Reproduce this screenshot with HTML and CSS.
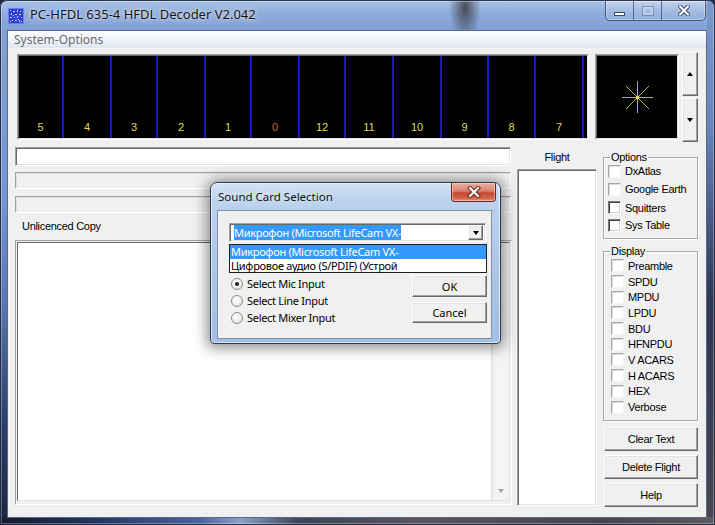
FILE: index.html
```html
<!DOCTYPE html>
<html lang="en">
<head>
<meta charset="utf-8">
<title>PC-HFDL 635-4 HFDL Decoder V2.042</title>
<link rel="stylesheet" href="styles.css">
</head>
<body>
<div class="win">
  <div class="titlebar">
    <svg class="appicon" width="16" height="16" viewBox="0 0 16 16">
      <rect x="0" y="0" width="16" height="16" fill="#2c3fd6"/>
      <rect x="0.5" y="0.5" width="15" height="15" fill="none" stroke="#6f7ff0" stroke-width="1"/>
      <g fill="#c9d0ff">
        <rect x="2" y="2" width="1" height="1"/><rect x="5" y="3" width="2" height="1"/><rect x="9" y="2" width="1" height="2"/>
        <rect x="12" y="3" width="1" height="1"/><rect x="3" y="5" width="1" height="2"/><rect x="7" y="6" width="2" height="1"/>
        <rect x="11" y="6" width="2" height="1"/><rect x="2" y="9" width="2" height="1"/><rect x="6" y="9" width="1" height="1"/>
        <rect x="9" y="8" width="1" height="2"/><rect x="13" y="9" width="1" height="1"/><rect x="4" y="12" width="1" height="1"/>
        <rect x="7" y="12" width="2" height="1"/><rect x="11" y="12" width="1" height="2"/><rect x="13" y="13" width="1" height="1"/>
        <rect x="5" y="7" width="1" height="1"/><rect x="10" y="11" width="1" height="1"/><rect x="2" y="13" width="1" height="1"/>
      </g>
    </svg>
    <span class="title">PC-HFDL 635-4 HFDL Decoder V2.042</span>
    <div class="caps">
      <div class="cap cap-min"><span class="g-min"></span></div>
      <div class="cap cap-max"><span class="g-max"></span></div>
      <div class="cap cap-close">
        <svg width="12" height="11" viewBox="0 0 12 11"><path d="M2 1.5 L10 9.5 M10 1.5 L2 9.5" stroke="#3a4a66" stroke-width="4" stroke-linecap="square"/><path d="M2 1.5 L10 9.5 M10 1.5 L2 9.5" stroke="#fff" stroke-width="2" stroke-linecap="square"/></svg>
      </div>
    </div>
  </div>

  <div class="client">
    <div class="menubar"><span>System-Options</span></div>

    <div class="toprow">
      <div class="spectrum">
        <div class="spec-inner">
          <div class="spec-col"><span>5</span></div>
          <div class="spec-col"><span>4</span></div>
          <div class="spec-col"><span>3</span></div>
          <div class="spec-col"><span>2</span></div>
          <div class="spec-col"><span>1</span></div>
          <div class="spec-col"><span class="zero">0</span></div>
          <div class="spec-col"><span>12</span></div>
          <div class="spec-col"><span>11</span></div>
          <div class="spec-col"><span>10</span></div>
          <div class="spec-col"><span>9</span></div>
          <div class="spec-col"><span>8</span></div>
          <div class="spec-col"><span>7</span></div>
          <div class="spec-fill"></div>
        </div>
      </div>
      <div class="scope">
        <div class="scope-inner">
          <svg width="80" height="82" viewBox="0 0 80 82">
            <g stroke="#b4b446" stroke-width="1">
              <line x1="40.5" y1="25" x2="40.5" y2="57"/>
              <line x1="25" y1="41.5" x2="56" y2="41.5"/>
              <line x1="29" y1="30" x2="52" y2="53"/>
              <line x1="52" y1="30" x2="29" y2="53"/>
            </g>
            <circle cx="40.5" cy="41.5" r="2" fill="#d8d860"/>
          </svg>
        </div>
      </div>
      <div class="spin">
        <div class="spinbtn"><span class="tri-up"></span></div>
        <div class="spinbtn"><span class="tri-down"></span></div>
      </div>
    </div>

    <div class="mainrow">
      <div class="leftcol">
        <div class="input"></div>
        <div class="status status-a"></div>
        <div class="status status-b"></div>
        <div class="lbl">Unlicenced Copy</div>
        <div class="textbox">
          <div class="tb-inner">
            <div class="tb-area"></div>
            <div class="vscroll"><span class="sc-down"></span></div>
          </div>
        </div>
      </div>

      <div class="flightcol">
        <div class="flightlbl">Flight</div>
        <div class="flightlist"></div>
      </div>

      <div class="rightcol">
        <fieldset class="grp grp-options">
          <legend>Options</legend>
          <div class="cbrow"><span class="cb"></span>DxAtlas</div>
          <div class="cbrow"><span class="cb"></span>Google Earth</div>
          <div class="cbrow cbrow-sq"><span class="cb cb-dark"></span>Squitters</div>
          <div class="cbrow cbrow-sys"><span class="cb cb-dark"></span>Sys Table</div>
        </fieldset>
        <fieldset class="grp grp-display">
          <legend>Display</legend>
          <div class="cbrow"><span class="cb"></span>Preamble</div>
          <div class="cbrow"><span class="cb"></span>SPDU</div>
          <div class="cbrow"><span class="cb"></span>MPDU</div>
          <div class="cbrow"><span class="cb"></span>LPDU</div>
          <div class="cbrow"><span class="cb"></span>BDU</div>
          <div class="cbrow"><span class="cb"></span>HFNPDU</div>
          <div class="cbrow"><span class="cb"></span>V ACARS</div>
          <div class="cbrow"><span class="cb"></span>H ACARS</div>
          <div class="cbrow"><span class="cb"></span>HEX</div>
          <div class="cbrow"><span class="cb"></span>Verbose</div>
        </fieldset>
        <div class="btn side-btn">Clear Text</div>
        <div class="btn side-btn">Delete Flight</div>
        <div class="btn side-btn">Help</div>
      </div>
    </div>
  </div>
</div>

<div class="dlg">
  <div class="dlg-title">
    <span class="dlg-caption">Sound Card Selection</span>
    <div class="dlg-close">
      <svg width="14" height="12" viewBox="0 0 14 12"><path d="M3 2 L11 10 M11 2 L3 10" stroke="#5a2a24" stroke-width="4.2" stroke-linecap="square"/><path d="M3 2 L11 10 M11 2 L3 10" stroke="#fff" stroke-width="2.2" stroke-linecap="square"/></svg>
    </div>
  </div>
  <div class="dlg-client">
    <div class="combo">
      <span class="combo-text"><span class="sel">Микрофон (Microsoft LifeCam VX-</span></span>
      <div class="combo-btn"><span class="tri-down"></span></div>
    </div>
    <div class="droplist">
      <div class="item item-active">Микрофон (Microsoft LifeCam VX-</div>
      <div class="item">Цифровое аудио (S/PDIF) (Устрой</div>
    </div>
    <div class="dlg-bottom">
      <div class="radios">
        <div class="radio"><span class="rdot rdot-on"></span>Select Mic Input</div>
        <div class="radio"><span class="rdot"></span>Select Line Input</div>
        <div class="radio"><span class="rdot"></span>Select Mixer Input</div>
      </div>
      <div class="dlg-btns">
        <div class="btn dbtn dbtn-ok">OK</div>
        <div class="btn dbtn dbtn-cancel">Cancel</div>
      </div>
    </div>
  </div>
</div>
</body>
</html>
```

FILE: styles.css
```css
* { box-sizing: border-box; }
html, body { margin: 0; padding: 0; }
body {
  width: 715px;
  height: 525px;
  overflow: hidden;
  position: relative;
  background: #1d2640;
  font-family: "Liberation Sans", Arial, sans-serif;
  font-size: 11px;
  color: #000;
}

/* ---------- main window frame ---------- */
.win {
  width: 715px;
  height: 525px;
  display: flex;
  flex-direction: column;
  border-radius: 7px 7px 0 0;
  box-shadow: inset 0 0 0 1px rgba(25, 35, 60, 0.9), inset 0 0 0 2px rgba(255, 255, 255, 0.3);
  background:
    radial-gradient(ellipse 16px 34px at 465px 8px, rgba(45, 40, 45, 0.75), rgba(45, 40, 45, 0) 100%),
    linear-gradient(90deg, #141b30 0, #22345c 90px, #4a64a0 200px, #8aa0c8 240px, #3c4356 300px, #5a5660 420px, #46444c 600px, #5d5a62 715px) left bottom / 715px 8px no-repeat,
    linear-gradient(180deg, #7a98cc 0, #6a86bb 120px, #2e3656 300px, #4a4650 525px) right top / 8px 525px no-repeat,
    linear-gradient(180deg, #a9c2e6 0, #8eabdb 14px, #81a1d5 30px, #7596cf 200px, #5a78b2 300px, #2c3f6e 420px, #1b2440 525px);
}

.titlebar {
  height: 30px;
  display: flex;
  align-items: flex-start;
  padding-left: 8px;
}
.appicon { margin-top: 8px; flex: none; }
.title {
  margin-left: 6px;
  margin-top: 6px;
  font-family: "Noto Sans", "Open Sans", sans-serif;
  font-size: 13px;
  line-height: 17px;
  color: #111;
  text-shadow: 0 0 6px rgba(255, 255, 255, 0.9), 0 0 2px rgba(255, 255, 255, 0.7);
}
.caps {
  margin-left: auto;
  margin-right: 9px;
  margin-top: 1px;
  display: flex;
  height: 20px;
  border: 1px solid rgba(35, 50, 85, 0.75);
  border-top: none;
  border-radius: 0 0 5px 5px;
  overflow: hidden;
  background: linear-gradient(180deg, rgba(255, 255, 255, 0.28), rgba(255, 255, 255, 0.08));
  box-shadow: inset 0 0 0 1px rgba(255, 255, 255, 0.35);
}
.cap { display: flex; align-items: center; justify-content: center; }
.cap-min { width: 27px; }
.cap-max { width: 28px; border-left: 1px solid rgba(35, 50, 85, 0.6); }
.cap-close { width: 44px; border-left: 1px solid rgba(35, 50, 85, 0.6); }
.g-min {
  width: 11px; height: 4px; margin-top: 6px;
  background: #fff;
  border: 1px solid #3a4a66;
}
.g-max {
  width: 10px; height: 8px; margin-top: 1px;
  border: 2px solid rgba(200, 215, 235, 0.7);
  outline: 1px solid rgba(58, 74, 102, 0.35);
}

/* ---------- client area ---------- */
.client {
  flex: 1;
  margin: 0 8px 7px 7px;
  border: 1px solid #56698c;
  background: #f0f0f0;
  display: flex;
  flex-direction: column;
}
.menubar {
  height: 17px;
  flex: none;
  padding-left: 6px;
  font-family: "Noto Sans", "Open Sans", sans-serif;
  font-size: 12px;
  line-height: 17px;
  color: #6b6b6b;
  background: linear-gradient(180deg, #fdfeff 0, #eef2f8 55%, #dfe6f1 100%);
}

.toprow {
  display: flex;
  align-items: flex-start;
  margin-top: 4px;
  padding: 0 8px 0 9px;
}
.spectrum, .scope {
  margin-top: 2px;
  height: 86px;
  border: 1px solid;
  border-color: #a0a0a0 #fff #fff #a0a0a0;
}
.spectrum { width: 572px; }
.scope { width: 84px; margin-left: 6px; }
.spec-inner, .scope-inner {
  height: 100%;
  border: 1px solid;
  border-color: #696969 #e3e3e3 #e3e3e3 #696969;
  background: #000;
}
.spec-inner {
  display: grid;
  grid-template-columns: 45px 48px 46px 48px 46px 48px 46px 48px 48px 47px 47px 48px 1fr;
}
.spec-col {
  display: flex;
  align-items: flex-end;
  justify-content: center;
  padding: 0 0 5px 0;
  color: #dede58;
  font-size: 11px;
  line-height: 12px;
  border-right: 2px solid #1a1ac4;
}
.spec-col .zero { color: #c8682a; }
.scope-inner svg { display: block; }

.spin {
  margin-left: 3px;
  width: 16px;
  display: flex;
  flex-direction: column;
  gap: 2px;
}
.spinbtn, .btn, .combo-btn {
  background: #f0f0f0;
  border: 1px solid;
  border-color: #fff #696969 #696969 #fff;
  box-shadow: inset -1px -1px 0 #a0a0a0, inset 1px 1px 0 #e3e3e3;
}
.spinbtn {
  height: 44px;
  display: flex;
  align-items: center;
  justify-content: center;
}
.tri-up, .tri-down {
  width: 0; height: 0;
  border-left: 3.5px solid transparent;
  border-right: 3.5px solid transparent;
}
.tri-up { border-bottom: 4px solid #000; }
.tri-down { border-top: 4px solid #000; }

/* ---------- main row ---------- */
.mainrow {
  display: flex;
  align-items: flex-start;
  margin-top: 5px;
  padding-left: 7px;
}
.leftcol {
  width: 497px;
  display: flex;
  flex-direction: column;
}
.input {
  width: 496px;
  height: 19px;
  background: #fff;
  border: 1px solid;
  border-color: #a0a0a0 #fff #fff #a0a0a0;
  box-shadow: inset 1px 1px 0 #696969, inset -1px -1px 0 #e3e3e3;
}
.status {
  width: 496px;
  height: 17px;
  border: 1px solid;
  border-color: #a0a0a0 #fff #fff #a0a0a0;
  box-shadow: inset 1px 1px 0 #e0e0e0;
}
.status-a { margin-top: 6px; }
.status-b { margin-top: 7px; }
.lbl {
  height: 27px;
  line-height: 27px;
  padding-left: 7px;
  letter-spacing: -0.3px;
}
.textbox {
  width: 497px;
  height: 265px;
  border: 1px solid;
  border-color: #a0a0a0 #fff #fff #a0a0a0;
  padding: 1px 1px 3px 1px;
}
.tb-inner {
  height: 100%;
  display: flex;
  border: 1px solid;
  border-color: #696969 #e3e3e3 #e3e3e3 #696969;
  background: #fff;
}
.tb-area { flex: 1; }
.vscroll {
  width: 18px;
  background: linear-gradient(90deg, #e9e9e9 0, #f5f5f5 3px, #f3f3f3 100%);
  border-left: 1px solid #e2e2e2;
  display: flex;
  align-items: flex-end;
  justify-content: center;
  padding-bottom: 7px;
}
.sc-down {
  width: 0; height: 0;
  border-left: 3.5px solid transparent;
  border-right: 3.5px solid transparent;
  border-top: 4px solid #a3a3a3;
}

.flightcol { width: 80px; margin-left: 5px; }
.flightlbl {
  height: 22px;
  line-height: 20px;
  text-align: center;
  letter-spacing: -0.3px;
}
.flightlist {
  height: 337px;
  background: #fff;
  border: 1px solid;
  border-color: #a0a0a0 #fff #fff #a0a0a0;
  box-shadow: inset 1px 1px 0 #696969, inset -1px -1px 0 #e3e3e3;
}

.rightcol {
  width: 96px;
  margin-left: 5px;
  padding-top: 4px;
  display: flex;
  flex-direction: column;
}
.grp {
  margin: 0 0 0 1px;
  width: 95px;
  min-width: 0;
  padding: 0 0 4px 0;
  border: 1px solid #a7a7a7;
  box-shadow: inset 1px 1px 0 #fff, 1px 1px 0 #fff;
  letter-spacing: -0.3px;
}
.grp legend {
  margin-left: 6px;
  padding: 0 1px;
  font-size: 11px;
  line-height: 12px;
}
.grp-options { padding-bottom: 5px; }
.grp-display { margin-top: 6px; padding-top: 1px; padding-bottom: 5px; }
.cbrow {
  display: flex;
  align-items: center;
  height: 18px;
}
.grp-options .cbrow:first-of-type { margin-top: -1px; }
.cbrow-sq { height: 19px; }
.cbrow-sys { height: 16px; }
.grp-options .cbrow .cb { margin-left: 4px; }
.grp-display .cbrow { height: 15.7px; }
.grp-display .cbrow .cb { margin-left: 7px; }
.cb {
  width: 13px;
  height: 13px;
  margin-right: 4px;
  flex: none;
  background: #fff;
  border: 1px solid;
  border-color: #a8a8a8 #f4f4f4 #f4f4f4 #a8a8a8;
  box-shadow: inset 1px 1px 0 #dcdcdc;
}
.cb-dark {
  border-color: #7a7a7a #fff #fff #7a7a7a;
  box-shadow: inset 1px 1px 0 #404040, inset -1px -1px 0 #d4d0c8;
}
.btn {
  display: flex;
  align-items: center;
  justify-content: center;
  letter-spacing: -0.3px;
}
.side-btn {
  width: 94px;
  height: 24px;
  margin-left: 2px;
  margin-top: 4px;
}
.grp-display + .side-btn { margin-top: 6px; }

/* ---------- dialog ---------- */
.dlg {
  position: absolute;
  left: 210px;
  top: 182px;
  width: 291px;
  height: 162px;
  border: 1px solid #2e3a50;
  border-radius: 7px 7px 4px 4px;
  padding: 0 8px 4px 6px;
  display: flex;
  flex-direction: column;
  background: linear-gradient(180deg, #d3e2f5 0, #bcd2ee 18px, #aac4e8 60%, #a3bfe6 100%);
  box-shadow: 0 1px 14px 3px rgba(0, 0, 0, 0.45), inset 0 0 0 1px rgba(255, 255, 255, 0.6);
  font-family: "Noto Sans", "Open Sans", sans-serif;
}
.dlg-title {
  height: 27px;
  flex: none;
  display: flex;
  align-items: flex-start;
}
.dlg-caption {
  margin-top: 6px;
  margin-left: 1px;
  font-size: 11.5px;
  line-height: 16px;
  color: #111;
  text-shadow: 0 0 6px rgba(255, 255, 255, 0.9);
}
.dlg-close {
  margin-left: auto;
  margin-right: -4px;
  width: 45px;
  height: 19px;
  border: 1px solid #6a2a22;
  border-top: none;
  border-radius: 0 0 4px 4px;
  background: linear-gradient(180deg, #eab1a3 0, #d98370 45%, #c4452f 55%, #d2644a 85%, #e9987c 100%);
  box-shadow: inset 0 0 0 1px rgba(255, 210, 200, 0.55);
  display: flex;
  align-items: center;
  justify-content: center;
}
.dlg-client {
  flex: 1;
  border: 1px solid #7f90aa;
  background: #f0f0f0;
  padding: 12px 0 0 11px;
  font-size: 11px;
  letter-spacing: -0.3px;
}
.combo {
  width: 257px;
  height: 19px;
  display: flex;
  align-items: center;
  background: #fff;
  border: 1px solid;
  border-color: #a0a0a0 #fff #fff #a0a0a0;
  box-shadow: inset 1px 1px 0 #696969, inset -1px -1px 0 #e3e3e3;
  padding: 1px 2px 1px 4px;
}
.combo-text { flex: 1; line-height: 13px; }
.sel { background: #3399ff; color: #fff; }
.combo-btn {
  width: 15px;
  height: 15px;
  display: flex;
  align-items: center;
  justify-content: center;
}
.droplist {
  width: 258px;
  height: 29px;
  margin-top: 2px;
  border: 1px solid #1e1e1e;
  background: #fff;
}
.item {
  height: 13.5px;
  line-height: 13px;
  padding-left: 1px;
  white-space: nowrap;
}
.item-active { background: #3399ff; color: #fff; }
.dlg-bottom {
  display: flex;
  margin-top: 2px;
}
.radios { margin-left: 2px; }
.radio {
  height: 17px;
  display: flex;
  align-items: center;
}
.rdot {
  width: 12px;
  height: 12px;
  margin-right: 4px;
  border-radius: 50%;
  border: 1px solid #8d8d8d;
  background: radial-gradient(circle at 40% 35%, #fff 0, #f4f4f4 40%, #d6d6d6 100%);
  display: flex;
  align-items: center;
  justify-content: center;
}
.rdot-on::after {
  content: "";
  width: 4px;
  height: 4px;
  border-radius: 50%;
  background: #1c1c1c;
}
.dlg-btns {
  margin-left: auto;
  margin-right: 4px;
  display: flex;
  flex-direction: column;
}
.dbtn { width: 75px; letter-spacing: 0; }
.dbtn-ok { height: 22px; }
.dbtn-cancel { height: 21px; margin-top: 5px; }
```
